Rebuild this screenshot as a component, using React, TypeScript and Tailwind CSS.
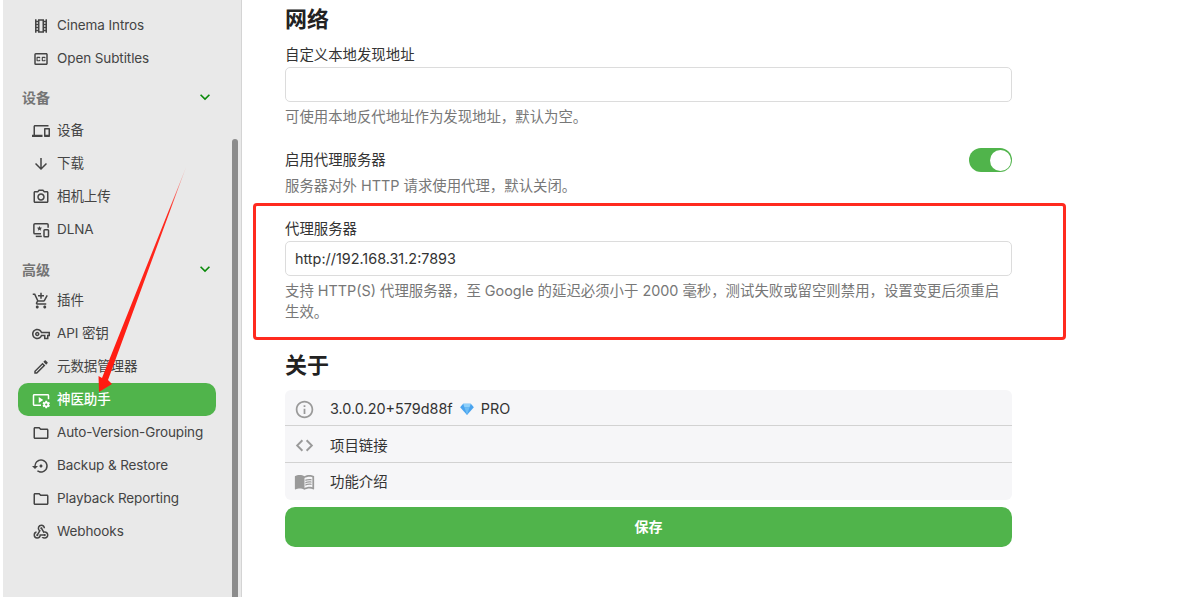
import React from 'react'
import {
  MdOutlineLocalMovies, MdOutlineClosedCaption, MdOutlineDevices, MdArrowDownward, MdOutlinePhotoCamera,
  MdOutlineAddShoppingCart, MdOutlineVpnKey, MdOutlineCreate, MdOutlineVideoSettings,
  MdOutlineFolder, MdOutlineSettingsBackupRestore, MdOutlineWebhook, MdKeyboardArrowDown, MdInfoOutline,
  MdOutlineMenuBook,
} from 'react-icons/md'

const DlnaIcon = ({ className }: { className?: string }) => (
  <svg viewBox="0 0 24 24" className={className} fill="none" stroke="currentColor" strokeWidth="2">
    <path d="M12 17H4a1.5 1.5 0 0 1-1.5-1.5V5A1.5 1.5 0 0 1 4 3.5h16A1.5 1.5 0 0 1 21.500 5v4" />
    <path d="M5 20.500h8" />
    <rect x="16" y="11.500" width="6" height="9.500" rx="1" />
    <path d="M10 6.500l1 2.300 2.400.2-1.800 1.600.6 2.400-2.200-1.300-2.200 1.300.6-2.400-1.800-1.600 2.400-.2z" fill="currentColor" stroke="none" />
  </svg>
)

const CodeIcon = ({ className }: { className?: string }) => (
  <svg viewBox="0 0 20 20" className={className} fill="none" stroke="currentColor" strokeWidth="1.800">
    <path d="M8 5 3 10l5 5M12 5l5 5-5 5" />
  </svg>
)

const NavItem = ({ icon: Icon, label, active }: { icon: any; label: string; active?: boolean }) => (
  <div className={`flex items-center h-[33px] w-[198px] pl-[14px] rounded-[10px] text-[13.5px] tracking-[-0.1px] ${active ? 'bg-[#50b44b] text-white font-medium' : 'text-[#444]'}`}>
    <Icon className="w-[18px] h-[18px] mr-[7px] shrink-0" />
    <span className="whitespace-nowrap">{label}</span>
  </div>
)

const NavHeader = ({ label, className }: { label: string; className: string }) => (
  <div className={`flex items-center justify-between w-[198px] pl-[4px] pr-[1px] text-[#757575] font-semibold text-[14px] ${className}`}>
    <span>{label}</span>
    <MdKeyboardArrowDown className="w-[20px] h-[20px] text-[#0a8a0a]" />
  </div>
)

const Sidebar = () => (
  <aside className="relative w-[242px] h-[597px] shrink-0 overflow-hidden bg-[#e9e9e9] border-l-[3px] border-r border-l-white border-r-[#d4d4d4] pl-[15px] pt-[9px]">
    <NavItem icon={MdOutlineLocalMovies} label="Cinema Intros" />
    <NavItem icon={MdOutlineClosedCaption} label="Open Subtitles" />
    <NavHeader label="设备" className="h-[24px] mt-[10px] mb-[5px]" />
    <NavItem icon={MdOutlineDevices} label="设备" />
    <NavItem icon={MdArrowDownward} label="下载" />
    <NavItem icon={MdOutlinePhotoCamera} label="相机上传" />
    <NavItem icon={DlnaIcon} label="DLNA" />
    <NavHeader label="高级" className="h-[24px] mt-[11px] mb-[3px]" />
    <NavItem icon={MdOutlineAddShoppingCart} label="插件" />
    <NavItem icon={MdOutlineVpnKey} label="API 密钥" />
    <NavItem icon={MdOutlineCreate} label="元数据管理器" />
    <NavItem icon={MdOutlineVideoSettings} label="神医助手" active />
    <NavItem icon={MdOutlineFolder} label="Auto-Version-Grouping" />
    <NavItem icon={MdOutlineSettingsBackupRestore} label="Backup & Restore" />
    <NavItem icon={MdOutlineFolder} label="Playback Reporting" />
    <NavItem icon={MdOutlineWebhook} label="Webhooks" />
    {/* scrollbar */}
    <div className="absolute right-[3px] top-[139px] bottom-0 w-[6px] rounded-t-[3px] bg-[#8c8c8c]" />
  </aside>
)

const Diamond = () => (
  <svg viewBox="0 0 16 14" className="w-[14px] h-[12px] mx-[7px]">
    <path d="M3.500 1h9L16 5 8 14 0 5z" fill="#4aa3ee" />
    <path d="M3.500 1h9L11 5H5z" fill="#8fd0fa" />
    <path d="M5 5h6l-3 9z" fill="#6cbcf5" />
  </svg>
)

const AboutRow = ({ icon: Icon, children, border, className }: { icon: any; children: React.ReactNode; border?: boolean; className: string }) => (
  <div className={`flex items-center pl-[9px] text-[14.4px] text-[#333] ${className} ${border ? 'border-b border-[#d2d2d2]' : ''}`}>
    <Icon className="w-[21px] h-[21px] text-[#9a9a9a] mr-[15px] shrink-0" />
    {children}
  </div>
)

export default function App() {
  return (
    <div className="relative flex w-[1196px] h-[597px] overflow-hidden bg-white font-['Inter','Noto_Sans_CJK_SC',sans-serif]">
      <Sidebar />
      <main className="w-[727px] ml-[43px] pt-[4px]">
        <h2 className="text-[22px] leading-[30px] font-bold text-[#222]">网络</h2>
        <label className="block mt-[10px] text-[14.4px] leading-[22px] text-[#333]">自定义本地发现地址</label>
        <div className="h-[35px] mt-[1px] border border-[#dcdcdc] rounded-[5px]" />
        <p className="mt-[5px] text-[14.4px] leading-[20px] text-[#777]">可使用本地反代地址作为发现地址，默认为空。</p>

        <div className="flex items-center justify-between mt-[21px] h-[24px]">
          <span className="text-[14.4px] text-[#333]">启用代理服务器</span>
          <span className="flex items-center justify-end w-[43px] h-[24px] pr-[1px] rounded-full bg-[#50b44b]">
            <span className="w-[21px] h-[21px] rounded-full bg-white" />
          </span>
        </div>
        <p className="mt-[4px] text-[14.4px] leading-[20px] text-[#777]">服务器对外 HTTP 请求使用代理，默认关闭。</p>

        <label className="block mt-[22px] text-[14.4px] leading-[22px] text-[#333]">代理服务器</label>
        <div className="flex items-center h-[35px] mt-[1px] pl-[9px] border border-[#dcdcdc] rounded-[5px] text-[14.4px] text-[#333]">http://192.168.31.2:7893</div>
        <p className="mt-[4px] text-[14.4px] leading-[21px] text-[#777]">支持 HTTP(S) 代理服务器，至 Google 的延迟必须小于 2000 毫秒，测试失败或留空则禁用，设置变更后须重启生效。</p>

        <h2 className="mt-[28px] text-[22px] leading-[30px] font-bold text-[#222]">关于</h2>
        <div className="mt-[10px] rounded-[6px] bg-[#f6f6f8]">
          <AboutRow icon={MdInfoOutline} border className="h-[36px] pt-[3px]">
            3.0.0.20+579d88f<Diamond />PRO
          </AboutRow>
          <AboutRow icon={CodeIcon} border className="h-[37px] pt-[3px]">项目链接</AboutRow>
          <AboutRow icon={MdOutlineMenuBook} className="h-[37px]">功能介绍</AboutRow>
        </div>
        <button className="block w-full h-[40px] mt-[7px] pb-[1px] rounded-[10px] bg-[#50b44b] text-white text-[14px] font-bold">保存</button>
      </main>

      {/* annotation: red box and arrow drawn over the screenshot */}
      <div className="absolute left-[253px] top-[203px] w-[813px] h-[137px] border-[3px] border-[#ff2a1f] rounded-[4px] pointer-events-none" />
      <svg className="absolute left-0 top-0 w-[1196px] h-[597px] pointer-events-none" viewBox="0 0 1196 597">
        <defs>
          <linearGradient id="arrowFade" x1="186" y1="166" x2="100" y2="392" gradientUnits="userSpaceOnUse">
            <stop offset="0" stopColor="#ff2a1f" stopOpacity="0.15" />
            <stop offset="0.2" stopColor="#ff2a1f" />
            <stop offset="1" stopColor="#ff1a10" />
          </linearGradient>
        </defs>
        <path d="M186.500 166 L108 380 L112 384 L99 392 L98.500 376 L102 378 Z" fill="url(#arrowFade)" />
      </svg>
    </div>
  )
}
